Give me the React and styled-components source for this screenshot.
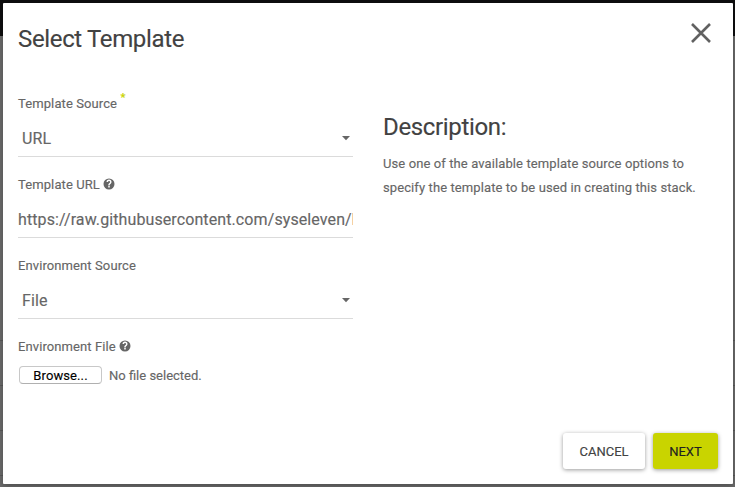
import React from "react";
import styled, { createGlobalStyle } from "styled-components";

const GlobalStyle = createGlobalStyle`
  * { box-sizing: border-box; }
  body {
    margin: 0;
    overflow: hidden;
    font-family: Roboto, "Liberation Sans", sans-serif;
    -webkit-text-stroke: 0.14px currentColor;
  }
  button { font-family: inherit; -webkit-text-stroke: inherit; }
`;

const Backdrop = styled.div`
  width: 735px;
  height: 487px;
  padding: 3px 2px 3px 3px;
  background:
    linear-gradient(#0e0e0f, #0e0e0f) 0 0 / 100% 36px no-repeat,
    repeating-linear-gradient(#6c6c6c 0 44px, #5a5a5a 44px 45px) 0 296px / 100% 191px no-repeat,
    #6c6c6c;
`;

const Dialog = styled.section`
  display: flex;
  flex-direction: column;
  height: 481px;
  padding: 0 15px;
  background: #fff;
  border-radius: 1px;
  box-shadow: 0 2px 6px rgba(0, 0, 0, 0.3);
`;

const Header = styled.header`
  display: flex;
  justify-content: space-between;
  height: 85px;
`;

const Title = styled.h1`
  margin: 20px 0 0;
  font-size: 24px;
  line-height: 32px;
  font-weight: 400;
  letter-spacing: -0.35px;
  color: #424242;
`;

const CloseButton = styled.button`
  width: 22px;
  height: 22px;
  margin: 19px 6px 0 0;
  padding: 0;
  border: 0;
  background: none;
  svg { display: block; }
`;

const Columns = styled.div`
  display: grid;
  grid-template-columns: 335px 335px;
  column-gap: 30px;
  flex: 1;
`;

const Field = styled.div`
  height: 81px;
`;

const Label = styled.label`
  display: flex;
  align-items: center;
  height: 30px;
  font-size: 13px;
  color: #666;
  letter-spacing: 0.1px;
  svg { margin-left: 3.5px; }
`;

const Required = styled.sup`
  margin: -10px 0 0 3.5px;
  font-size: 11px;
  line-height: 10px;
  font-weight: 700;
  color: #c9d400;
`;

const Control = styled.div`
  display: flex;
  align-items: center;
  justify-content: space-between;
  height: 39px;
  padding: ${(p) => (p.$select ? "3px 2px 0 4px" : "3px 0 0")};
  border-bottom: 1px solid #dbdbdb;
  overflow: hidden;
  font-size: 16px;
  line-height: 24px;
  letter-spacing: 0.1px;
  white-space: nowrap;
  color: #666;
`;

const FileRow = styled.div`
  display: flex;
  align-items: center;
  height: 28px;
  padding-left: 1px;
  gap: 7px;
  font-size: 13px;
  color: #666;
`;

const BrowseButton = styled.button`
  width: 83px;
  height: 18px;
  padding: 1px 0 0;
  border: 1px solid #c8c8c8;
  border-bottom-color: #b0b0b0;
  border-radius: 4px;
  background: #fff;
  font-size: 13px;
  line-height: 16px;
  letter-spacing: 0.1px;
  color: #000;
`;

const Description = styled.div`
  padding-top: 23px;
`;

const DescriptionTitle = styled.h2`
  margin: 0 0 9px;
  font-size: 24px;
  line-height: 32px;
  font-weight: 400;
  letter-spacing: -0.35px;
  color: #424242;
`;

const DescriptionText = styled.p`
  margin: 0;
  font-size: 13px;
  line-height: 24px;
  letter-spacing: 0.1px;
  white-space: nowrap;
  color: #666;
`;

const Footer = styled.footer`
  display: flex;
  justify-content: flex-end;
  gap: 8px;
  height: 51px;
`;

const ActionButton = styled.button`
  width: ${(p) => (p.$primary ? "65px" : "82px")};
  height: 36px;
  padding: 0;
  border: 0;
  border-radius: 3px;
  background: ${(p) => (p.$primary ? "#c9d400" : "#fff")};
  box-shadow: 0 1px 4px rgba(0, 0, 0, 0.4);
  font-size: 13px;
  color: ${(p) => (p.$primary ? "#212121" : "#424242")};
`;

const HelpIcon = () => (
  <svg width="12" height="12" viewBox="0 0 24 24" fill="#666">
    <path d="M12 1a11 11 0 1 0 0 22 11 11 0 0 0 0-22zm1.5 18h-3v-3h3v3zm2.4-7.9-1 1c-1 .9-1.4 1.4-1.4 2.9h-3c0-2.3.7-3.3 1.8-4.3l1.3-1.2c.5-.5.6-.8.6-1.3a2.1 2.1 0 0 0-4.2 0H7a5 5 0 0 1 10 0c0 1.2-.3 2.1-1.1 2.9z" />
  </svg>
);

const CaretIcon = () => (
  <svg width="10" height="5" viewBox="0 0 10 5" fill="#666">
    <path d="M1 0h8L5 4.2z" />
  </svg>
);

const CloseIcon = () => (
  <svg width="22" height="22" viewBox="0 0 22 22" fill="none" stroke="#616161" strokeWidth="2.6">
    <path d="M2 2l18 18M20 2L2 20" />
  </svg>
);

export default function App() {
  return (
    <Backdrop>
      <GlobalStyle />
      <Dialog>
        <Header>
          <Title>Select Template</Title>
          <CloseButton aria-label="Close"><CloseIcon /></CloseButton>
        </Header>
        <Columns>
          <div>
            <Field>
              <Label>Template Source<Required>*</Required></Label>
              <Control $select><span>URL</span><CaretIcon /></Control>
            </Field>
            <Field>
              <Label>Template URL<HelpIcon /></Label>
              <Control>https://raw.githubusercontent.com/syseleven/h</Control>
            </Field>
            <Field>
              <Label>Environment Source</Label>
              <Control $select><span>File</span><CaretIcon /></Control>
            </Field>
            <Field>
              <Label>Environment File<HelpIcon /></Label>
              <FileRow><BrowseButton>Browse...</BrowseButton><span>No file selected.</span></FileRow>
            </Field>
          </div>
          <Description>
            <DescriptionTitle>Description:</DescriptionTitle>
            <DescriptionText>
              Use one of the available template source options to<br />
              specify the template to be used in creating this stack.
            </DescriptionText>
          </Description>
        </Columns>
        <Footer>
          <ActionButton>CANCEL</ActionButton>
          <ActionButton $primary>NEXT</ActionButton>
        </Footer>
      </Dialog>
    </Backdrop>
  );
}
